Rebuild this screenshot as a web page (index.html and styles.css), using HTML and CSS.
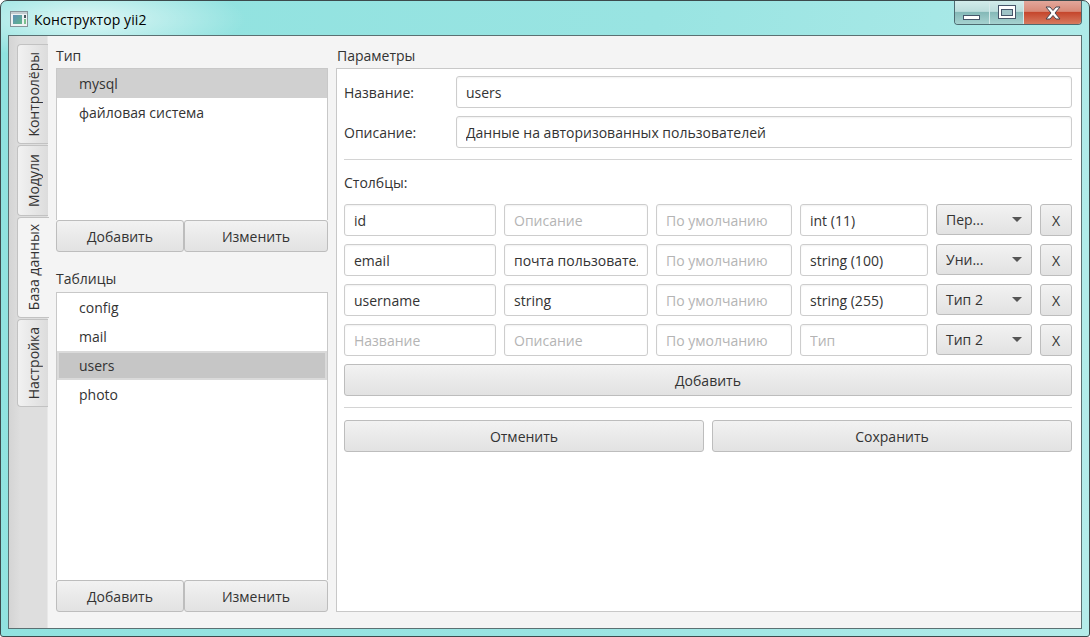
FILE: index.html
```html
<!DOCTYPE html>
<html lang="ru">
<head>
  <meta charset="UTF-8">
  <title>Конструктор yii2</title>
  <link rel="stylesheet" href="styles.css">
</head>
<body>
  <div class="window">
    <div class="titlebar">
      <svg class="app-icon" width="18" height="16" viewBox="0 0 18 16">
        <defs>
          <linearGradient id="icon-fill" x1="0" y1="0" x2="1" y2="1">
            <stop offset="0" stop-color="#5f8fb8"/>
            <stop offset="1" stop-color="#5fb58a"/>
          </linearGradient>
        </defs>
        <rect x="0.5" y="0.5" width="17" height="15" fill="#eef2f3" stroke="#87949a"/>
        <rect x="1" y="1" width="16" height="2" fill="#c4ccd0"/>
        <rect x="3" y="4" width="9" height="9" fill="url(#icon-fill)"/>
        <rect x="14" y="4" width="2" height="3" fill="#4a5a60"/>
        <rect x="14" y="8" width="2" height="5" fill="#7cc08e"/>
      </svg>
      <span class="title-text">Конструктор yii2</span>
      <div class="win-buttons">
        <div class="win-btn win-min">
          <svg width="18" height="5" viewBox="0 0 18 5"><rect x="0.5" y="0.5" width="16" height="4" fill="#fff" stroke="#46566a"/></svg>
        </div>
        <div class="win-btn">
          <svg width="18" height="15" viewBox="0 0 18 15"><rect x="0.5" y="0.5" width="17" height="13" fill="#fff" stroke="#46566a"/><rect x="3.5" y="4.5" width="11" height="6" fill="#9fc4c8" stroke="#46566a"/></svg>
        </div>
        <div class="win-btn close">
          <svg width="16" height="14" viewBox="0 0 16 14"><path d="M1 1h4l3 3.5L11 1h4l-5 6 5 6h-4L8 9.5 5 13H1l5-6z" fill="#fff" stroke="#46454f"/></svg>
        </div>
      </div>
    </div>

    <div class="client">
      <div class="tabs">
        <div class="tab tab-1"><span>Контролёры</span></div>
        <div class="tab tab-2"><span>Модули</span></div>
        <div class="tab tab-3 active"><span>База данных</span></div>
        <div class="tab tab-4"><span>Настройка</span></div>
      </div>

      <div class="side">
        <div class="caption">Тип</div>
        <div class="list list-top">
          <div class="list-item selected">mysql</div>
          <div class="list-item">файловая система</div>
        </div>
        <div class="btn-pair">
          <button class="btn">Добавить</button>
          <button class="btn">Изменить</button>
        </div>

        <div class="caption caption-second">Таблицы</div>
        <div class="list list-bottom">
          <div class="list-item">config</div>
          <div class="list-item">mail</div>
          <div class="list-item selected focused">users</div>
          <div class="list-item">photo</div>
        </div>
        <div class="btn-pair">
          <button class="btn">Добавить</button>
          <button class="btn">Изменить</button>
        </div>
      </div>

      <div class="params">
        <div class="caption">Параметры</div>
        <div class="panel">
          <div class="form-row">
            <label class="form-label">Название:</label>
            <input class="field" type="text" value="users">
          </div>
          <div class="form-row">
            <label class="form-label">Описание:</label>
            <input class="field" type="text" value="Данные на авторизованных пользователей">
          </div>
          <div class="sep sep-first"></div>
          <div class="columns-label">Столбцы:</div>

          <div class="col-row">
            <input class="field" type="text" value="id">
            <input class="field" type="text" placeholder="Описание">
            <input class="field" type="text" placeholder="По умолчанию">
            <input class="field" type="text" value="int (11)">
            <div class="combo"><span>Пер...</span><i class="arrow"></i></div>
            <button class="btn btn-x">X</button>
          </div>
          <div class="col-row">
            <input class="field" type="text" value="email">
            <input class="field" type="text" value="почта пользователя">
            <input class="field" type="text" placeholder="По умолчанию">
            <input class="field" type="text" value="string (100)">
            <div class="combo"><span>Уни...</span><i class="arrow"></i></div>
            <button class="btn btn-x">X</button>
          </div>
          <div class="col-row">
            <input class="field" type="text" value="username">
            <input class="field" type="text" value="string">
            <input class="field" type="text" placeholder="По умолчанию">
            <input class="field" type="text" value="string (255)">
            <div class="combo"><span>Тип 2</span><i class="arrow"></i></div>
            <button class="btn btn-x">X</button>
          </div>
          <div class="col-row">
            <input class="field" type="text" placeholder="Название">
            <input class="field" type="text" placeholder="Описание">
            <input class="field" type="text" placeholder="По умолчанию">
            <input class="field" type="text" placeholder="Тип">
            <div class="combo"><span>Тип 2</span><i class="arrow"></i></div>
            <button class="btn btn-x">X</button>
          </div>

          <button class="btn btn-wide">Добавить</button>
          <div class="sep sep-second"></div>
          <div class="actions">
            <button class="btn">Отменить</button>
            <button class="btn">Сохранить</button>
          </div>
        </div>
      </div>
    </div>
  </div>
</body>
</html>
```

FILE: styles.css
```css
* {
  box-sizing: border-box;
}

html, body {
  margin: 0;
  padding: 0;
  width: 1090px;
  height: 637px;
  overflow: hidden;
  background: #fff;
}

body {
  font-family: "Open Sans", "Noto Sans", sans-serif;
  font-size: 14px;
  color: #333;
}

.window {
  width: 1090px;
  height: 637px;
  padding: 0 7px 7px 7px;
  display: flex;
  flex-direction: column;
  border: 1px solid #3c4a4c;
  border-radius: 7px 7px 3px 3px;
  background:
    radial-gradient(ellipse 160px 40px at 85px 18px, rgba(255, 255, 255, 0.7), rgba(255, 255, 255, 0) 100%),
    linear-gradient(100deg, #8fe2df 0%, #99e4e2 55%, #a6e8e6 78%, #b4ecea 100%);
}

.titlebar {
  height: 34px;
  flex: none;
  display: flex;
  align-items: flex-start;
  color: #000;
}

.app-icon {
  margin: 10px 0 0 2px;
}

.title-text {
  margin: 9px 0 0 6px;
  font-size: 14px;
  letter-spacing: 0.08px;
}

.win-buttons {
  margin-left: auto;
  width: 128px;
  height: 24px;
  display: flex;
  border: 1px solid #4d6a70;
  border-top: 0;
  border-radius: 0 0 4px 4px;
  overflow: hidden;
}

.win-btn {
  width: 34px;
  display: flex;
  align-items: center;
  justify-content: center;
  border-right: 1px solid #d5eaea;
  background: linear-gradient(#d2ecea 0%, #bcdddc 45%, #85b9b8 50%, #a6d2d0 100%);
}

.win-btn.win-min {
  width: 35px;
  align-items: flex-end;
  padding-bottom: 4px;
}

.win-btn.close {
  flex: 1;
  border-right: 0;
  background: linear-gradient(#e2a79b 0%, #d88a78 45%, #c5472d 50%, #d77a5f 100%);
}

.client {
  flex: 1;
  min-height: 0;
  display: flex;
  border: 1px solid #5b7072;
  background: #f4f4f4;
}

.tabs {
  width: 39px;
  flex: none;
  padding: 8px 0 0 8px;
  display: flex;
  flex-direction: column;
  gap: 1px;
  background: linear-gradient(90deg, #d4d4d4, #dedede 30%);
  border-right: 1px solid #e8e8e8;
}

.tab {
  width: 31px;
  display: flex;
  align-items: center;
  justify-content: center;
  border: 1px solid #c2c2c2;
  border-right: 0;
  border-radius: 4px 0 0 4px;
  background: linear-gradient(90deg, #f2f2f2, #dcdcdc);
}

.tab span {
  writing-mode: vertical-rl;
  transform: rotate(180deg);
}

.tab.active {
  background: #f4f4f4;
  margin-right: -1px;
  width: 32px;
}

.tab-1 { height: 100px; }
.tab-2 { height: 71px; }
.tab-3 { height: 101px; }
.tab-4 { height: 88px; }

.side {
  width: 272px;
  flex: none;
  margin-left: 8px;
  display: flex;
  flex-direction: column;
}

.caption {
  height: 32px;
  padding-top: 10px;
  flex: none;
}

.caption-second {
  height: 40px;
  padding-top: 17px;
}

.list {
  background: #fff;
  border: 1px solid #c8c8c8;
  border-bottom: 0;
}

.list-top { height: 152px; flex: none; }
.list-bottom { flex: 1; }

.list-item {
  height: 29px;
  padding: 5px 22px 0;
}

.list-item.selected {
  background: #d0d0d0;
}

.list-item.focused {
  background: #c6c6c6;
  box-shadow: inset 0 0 0 2px #dadada;
}

.btn {
  font-family: inherit;
  font-size: 14px;
  color: #333;
  border: 1px solid #bdbdbd;
  border-radius: 3px;
  background: linear-gradient(#f2f2f2, #e2e2e2);
  padding: 0;
}

.btn-pair {
  height: 32px;
  flex: none;
  display: grid;
  grid-template-columns: 128px 144px;
}

.side .btn-pair:last-child {
  margin-bottom: 16px;
}

.params {
  flex: 1;
  min-width: 0;
  margin-left: 8px;
  display: flex;
  flex-direction: column;
}

.params .caption {
  padding-left: 1px;
}

.panel {
  flex: 1;
  margin-bottom: 16px;
  padding: 7px 9px 7px 7px;
  background: #fff;
  border: 1px solid #c8c8c8;
  border-right: 0;
}

.form-row {
  display: flex;
  align-items: center;
  height: 32px;
  margin-bottom: 8px;
}

.form-label {
  width: 112px;
  flex: none;
}

.field {
  height: 32px;
  min-width: 0;
  width: 100%;
  padding: 0 9px;
  font-family: inherit;
  font-size: 14px;
  color: #333;
  background: #fff;
  border: 1px solid #cdcdcd;
  border-radius: 3px;
  box-shadow: inset 0 1px 2px rgba(0, 0, 0, 0.06);
  outline: none;
}

.field::placeholder {
  color: #b4b4b4;
  opacity: 1;
}

.sep {
  height: 1px;
  background: #d4d4d4;
}

.sep-first { margin-top: 11px; }
.sep-second { margin-top: 11px; }

.columns-label {
  height: 44px;
  padding-top: 13px;
}

.col-row {
  display: grid;
  grid-template-columns: 152px 144px 136px 128px 96px 32px;
  gap: 8px;
  height: 32px;
  margin-bottom: 8px;
}

.combo {
  height: 31px;
  padding: 0 9px;
  display: flex;
  align-items: center;
  justify-content: space-between;
  border: 1px solid #bdbdbd;
  border-radius: 3px;
  background: linear-gradient(#f2f2f2, #e2e2e2);
}

.arrow {
  width: 0;
  height: 0;
  border-left: 5px solid transparent;
  border-right: 5px solid transparent;
  border-top: 5px solid #555;
}

.btn-wide {
  width: 100%;
  height: 32px;
  display: block;
}

.actions {
  margin-top: 12px;
  display: grid;
  grid-template-columns: 1fr 1fr;
  gap: 8px;
}

.actions .btn {
  height: 32px;
}
```
